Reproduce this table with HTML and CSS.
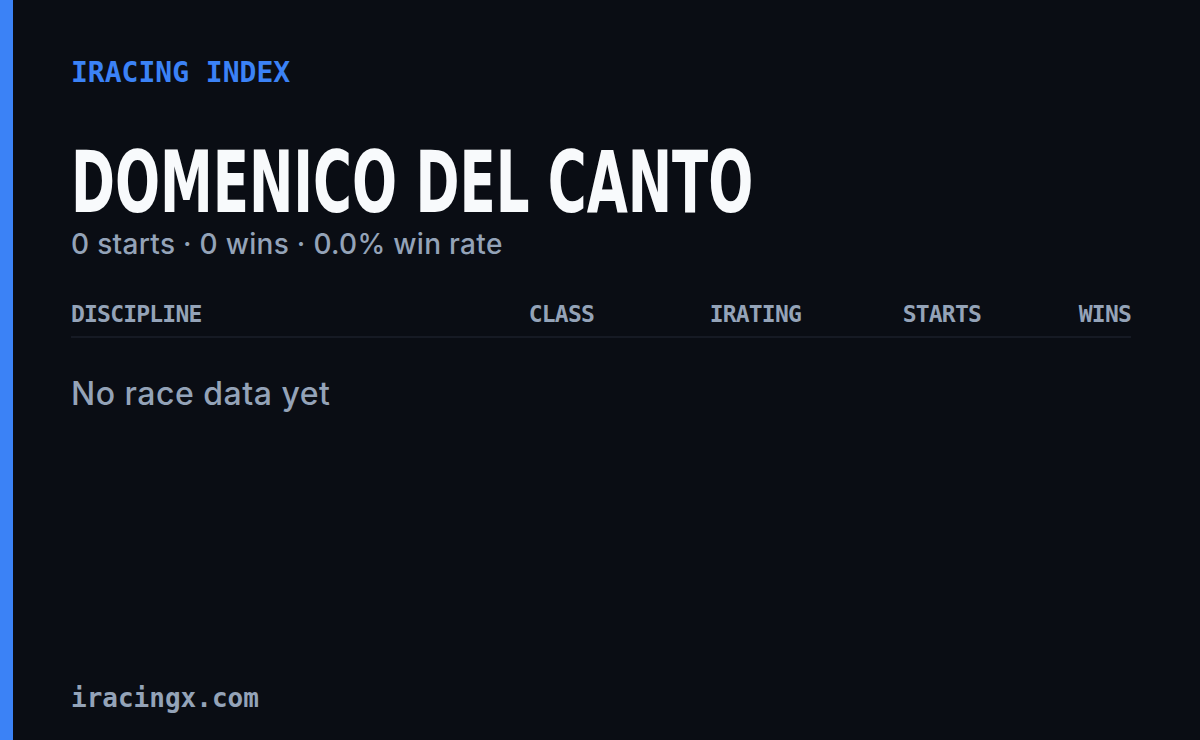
FILE: index.html
```html
<!DOCTYPE html>
<html lang="en">
<head>
    <meta charset="UTF-8">
    <meta name="viewport" content="width=device-width, initial-scale=1.0">
    <title>Domenico Del Canto - iRacing Index</title>
    <link rel="stylesheet" href="styles.css">
</head>
<body>

<div class="card">
    <div class="accent"></div>
    <div class="content">
        <div class="brand">IRACING INDEX</div>

        <h1 class="driver"><span class="driver-name">DOMENICO DEL CANTO</span></h1>
        <p class="summary">0 starts · 0 wins · 0.0% win rate</p>

        <div class="table-head">
            <span class="col-left">DISCIPLINE</span>
            <span>CLASS</span>
            <span>IRATING</span>
            <span>STARTS</span>
            <span>WINS</span>
        </div>
        <p class="empty">No race data yet</p>

        <div class="footer">iracingx.com</div>
    </div>
</div>

</body>
</html>
```

FILE: styles.css
```css
html, body {
    margin: 0;
    padding: 0;
    background-color: #0a0d14;
}
.card {
    display: flex;
    height: 740px;
    overflow: hidden;
}
.accent {
    width: 13px;
    flex-shrink: 0;
    background-color: #3b82f6;
}
.content {
    flex: 1;
    display: flex;
    flex-direction: column;
    padding: 59px 69px 29px 58px;
}
.brand {
    font-family: "DejaVu Sans Mono", monospace;
    font-weight: 700;
    font-size: 28px;
    line-height: 1;
    color: #3b82f6;
}
.driver {
    margin: 53px 0 0 0;
    height: 85px;
    font-family: "DejaVu Sans Condensed", "DejaVu Sans", sans-serif;
    font-weight: 700;
    font-size: 85px;
    line-height: 85px;
    color: #f8fafc;
    white-space: nowrap;
}
.driver-name {
    display: inline-block;
    vertical-align: top;
    transform: scaleX(0.693);
    transform-origin: left center;
}
.summary {
    margin: 5px 0 0 0;
    font-family: "Inter", sans-serif;
    font-weight: 500;
    font-size: 28px;
    line-height: 1;
    letter-spacing: 0.3px;
    color: #94a3b8;
}
.table-head {
    display: grid;
    grid-template-columns: 1fr 140px 207px 180px 150px;
    margin-top: 45px;
    padding-bottom: 10px;
    border-bottom: 2px solid #161a24;
    font-family: "DejaVu Sans Mono", monospace;
    font-weight: 700;
    font-size: 23px;
    line-height: 1;
    letter-spacing: -0.8px;
    color: #94a3b8;
    text-align: right;
}
.table-head .col-left {
    text-align: left;
}
.empty {
    margin: 40px 0 0 0;
    font-family: "Inter", sans-serif;
    font-weight: 500;
    font-size: 32px;
    line-height: 1;
    letter-spacing: 0.5px;
    color: #94a3b8;
}
.footer {
    margin-top: auto;
    font-family: "DejaVu Sans Mono", monospace;
    font-weight: 700;
    font-size: 26px;
    line-height: 1;
    color: #94a3b8;
}
```
